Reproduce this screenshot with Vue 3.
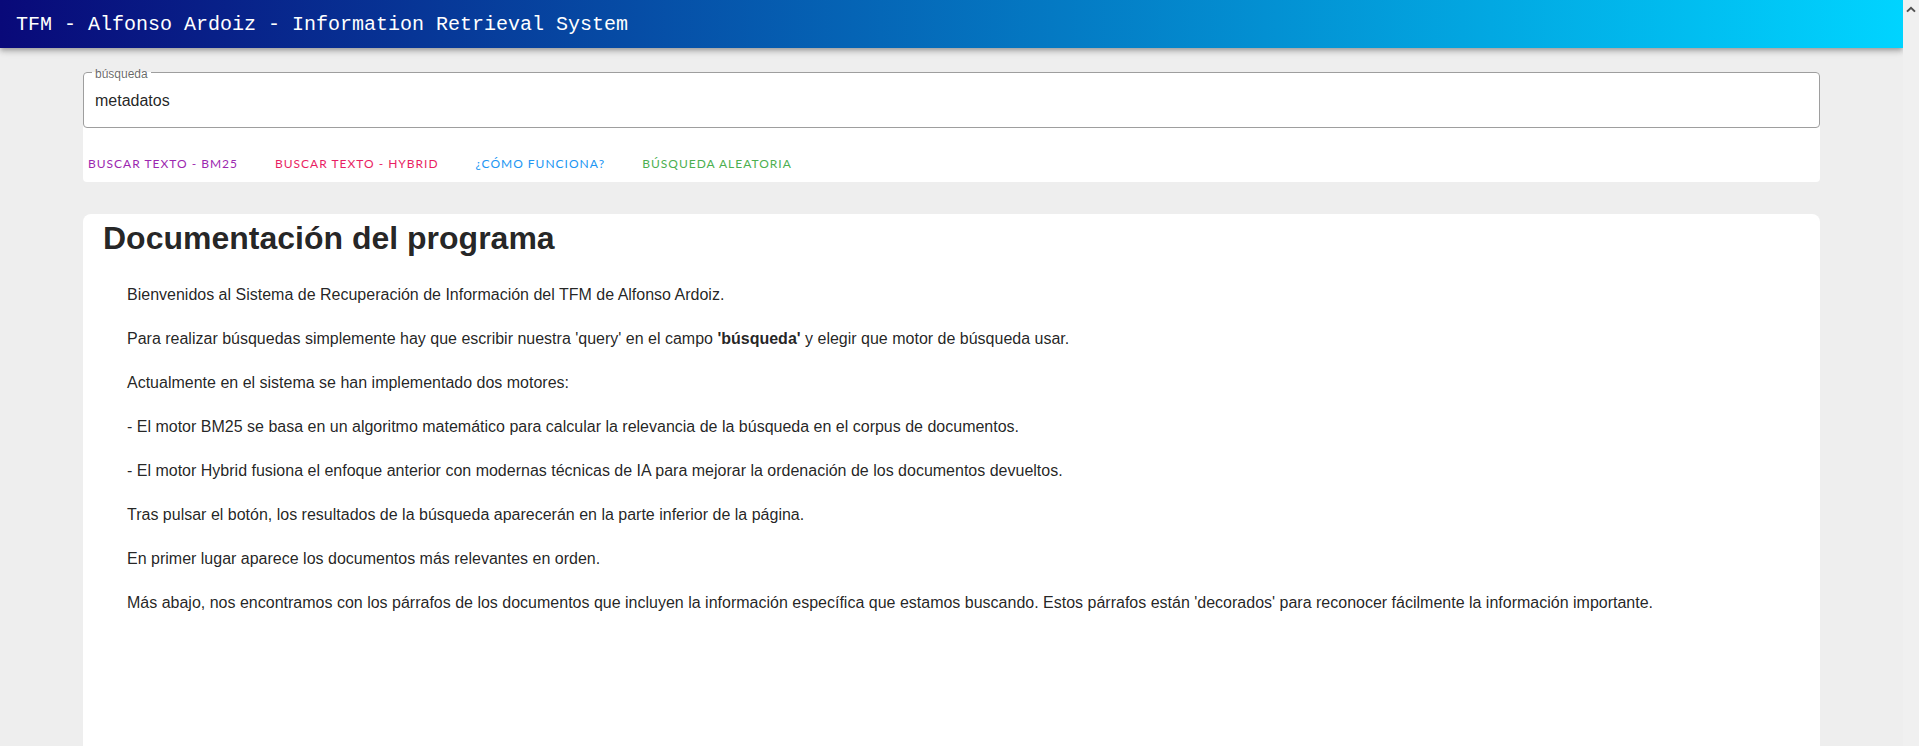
<script setup>
import { ref } from 'vue'

const query = ref('metadatos')

const actions = [
  { label: 'Buscar texto - BM25', tone: 'purple' },
  { label: 'Buscar texto - Hybrid', tone: 'pink' },
  { label: '¿Cómo funciona?', tone: 'blue' },
  { label: 'Búsqueda aleatoria', tone: 'green' }
]
</script>

<template>
  <div class="window">
    <div class="app">
      <header class="bar">
        <span class="bar-title">TFM - Alfonso Ardoiz - Information Retrieval System</span>
      </header>

      <main class="content">
        <form class="search" @submit.prevent>
          <div class="field">
            <label class="field-label" for="query">búsqueda</label>
            <input id="query" v-model="query" class="field-input" type="text" autocomplete="off" spellcheck="false" />
          </div>
          <div class="actions">
            <button v-for="a in actions" :key="a.label" type="button" class="action" :class="a.tone">
              {{ a.label }}
            </button>
          </div>
        </form>

        <section class="card">
          <h1>Documentación del programa</h1>
          <div class="text">
            <p>Bienvenidos al Sistema de Recuperación de Información del TFM de Alfonso Ardoiz.</p>
            <p>Para realizar búsquedas simplemente hay que escribir nuestra 'query' en el campo <strong>'búsqueda'</strong> y elegir que motor de búsqueda usar.</p>
            <p>Actualmente en el sistema se han implementado dos motores:</p>
            <p>- El motor BM25 se basa en un algoritmo matemático para calcular la relevancia de la búsqueda en el corpus de documentos.</p>
            <p>- El motor Hybrid fusiona el enfoque anterior con modernas técnicas de IA para mejorar la ordenación de los documentos devueltos.</p>
            <p>Tras pulsar el botón, los resultados de la búsqueda aparecerán en la parte inferior de la página.</p>
            <p>En primer lugar aparece los documentos más relevantes en orden.</p>
            <p>Más abajo, nos encontramos con los párrafos de los documentos que incluyen la información específica que estamos buscando. Estos párrafos están 'decorados' para reconocer fácilmente la información importante.</p>
          </div>
        </section>
      </main>
    </div>

    <div class="scrollbar" aria-hidden="true">
      <svg width="10" height="7" viewBox="0 0 10 7">
        <path d="M1 5.6 L5 1.8 L9 5.6" fill="none" stroke="#505050" stroke-width="2" />
      </svg>
    </div>
  </div>
</template>

<style>
body {
  margin: 0;
  background: #eeeeee;
}
</style>

<style scoped>
.window {
  display: flex;
  min-height: 100vh;
  font-family: "Liberation Sans", Arial, sans-serif;
  font-size: 16px;
  color: rgba(0, 0, 0, 0.87);
  background: #eeeeee;
}

.app {
  flex: 1;
  min-width: 0;
  display: flex;
  flex-direction: column;
}

.bar {
  display: flex;
  align-items: center;
  height: 48px;
  box-sizing: border-box;
  padding: 2px 16px 0;
  background: linear-gradient(90deg, #090979, #00d4ff);
  box-shadow: 0 2px 4px -1px rgba(0, 0, 0, 0.2), 0 4px 5px rgba(0, 0, 0, 0.14), 0 1px 10px rgba(0, 0, 0, 0.12);
  clip-path: inset(0 0 -16px 0);
}

.bar-title {
  font-family: "Liberation Mono", "Courier New", monospace;
  font-size: 20px;
  line-height: 30px;
  color: #fff;
}

.content {
  flex: 1;
  display: flex;
  flex-direction: column;
  gap: 32px;
  padding: 24px 83px 0;
}

.search {
  background: #fff;
  border-radius: 4px;
}

.field {
  position: relative;
  height: 56px;
  box-sizing: border-box;
  border: 1px solid #9e9e9e;
  border-radius: 4px;
}

.field-label {
  position: absolute;
  top: -9px;
  left: 8px;
  padding: 0 3px;
  font-size: 12px;
  line-height: 20px;
  color: rgba(0, 0, 0, 0.6);
  background: linear-gradient(#eeeeee 8px, #fff 8px);
}

.field-input {
  display: block;
  width: 100%;
  height: 54px;
  box-sizing: border-box;
  padding: 2px 11px 0;
  border: 0;
  outline: 0;
  border-radius: 4px;
  background: transparent;
  font: inherit;
  color: inherit;
}

.actions {
  display: flex;
  flex-wrap: wrap;
  gap: 27px;
  padding: 27px 0 9px;
}

.action {
  padding: 0 5px;
  border: 0;
  background: transparent;
  font-family: Lato, "Noto Sans", sans-serif;
  font-size: 12px;
  line-height: 18px;
  letter-spacing: 1px;
  text-transform: uppercase;
}

.purple { color: #9c27b0; }
.pink { color: #e91e63; }
.blue { color: #2196f3; }
.green { color: #4caf50; }

.card {
  flex: 1;
  padding: 0 20px;
  background: #fff;
  border-radius: 8px 8px 0 0;
}

h1 {
  margin: 0;
  font-size: 32px;
  line-height: 48px;
}

.text {
  padding: 21px 24px;
}

p {
  margin: 0 0 20px;
  line-height: 24px;
}

.scrollbar {
  width: 16px;
  padding-top: 4px;
  box-sizing: border-box;
  background: #f0f0f0;
  text-align: center;
  line-height: 7px;
}

.scrollbar svg {
  display: inline-block;
}
</style>
